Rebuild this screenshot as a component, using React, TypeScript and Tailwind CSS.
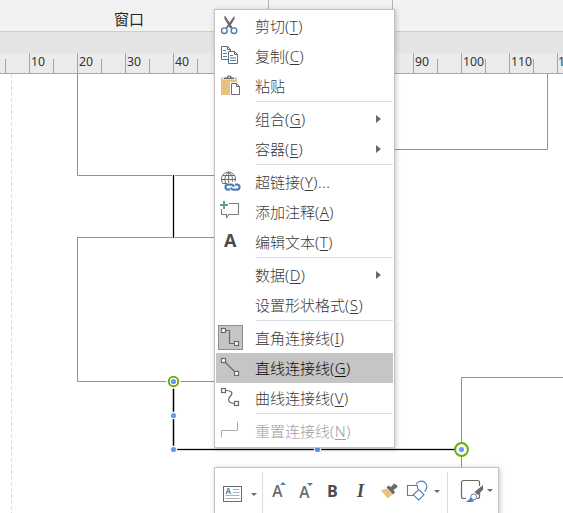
import type { ReactNode } from "react";

const GREY = "#6a6a6a";
const BLUE = "#4a80b5";

type Item = {
  label: string;
  hotkey?: string;
  tail?: string;
  icon?: ReactNode;
  submenu?: boolean;
  selected?: boolean;
  disabled?: boolean;
};

const Handle = ({ x, y }: { x: number; y: number }) => (
  <rect x={x - 2} y={y - 2} width="4" height="4" fill="#fff" stroke={GREY} strokeWidth="1.2" />
);

const CutIcon = (
  <>
    <path d="M8.300 5.200L9.300 5L16.500 16.500L14.800 17.800L12.800 15.500L10.500 18L9.500 17L12 13.500L8.500 8ZM18.300 5L18.800 7.500L14.800 14L12.700 12.500Z" fill={GREY} />
    <circle cx="8.3" cy="19.7" r="2.8" stroke={BLUE} strokeWidth="1.4" />
    <circle cx="18" cy="19.7" r="2.8" stroke={BLUE} strokeWidth="1.4" />
  </>
);

const CopyIcon = (
  <>
    <path d="M12 18.5H5.5V5.5H11.5L14.5 8.5V10M11.5 5.5V8.5H14.5" stroke={GREY} />
    <path d="M7 9.5H10M7 12.5H11M7 15.5H11" stroke={BLUE} />
    <path d="M12.5 10.5H18.5L21.5 13.5V22.5H12.5ZM18.5 10.5V13.5H21.5" fill="#fff" stroke={GREY} />
    <path d="M14 14.5H17M14 17H20M14 19.5H20" stroke={BLUE} />
  </>
);

const PasteIcon = (
  <>
    <rect x="5" y="6.5" width="16" height="17.5" fill="#e9c07d" />
    <path d="M7.5 5.5H19V9H7.5Z" fill="#fff" />
    <path d="M8 8.2V6.4H10.8C11 4 15.5 4 15.7 6.4H18.3V8.2Z" fill={GREY} />
    <circle cx="13.2" cy="6.2" r="0.8" fill="#fff" />
    <path d="M14 11H25V25H14Z" fill="#fff" />
    <path d="M15.5 12.5H20.5L23.5 15.5V23.5H15.5ZM20.5 12.5V15.5H23.5" fill="#fff" stroke={GREY} />
  </>
);

const LinkIcon = (
  <>
    <path d="M7.8 17.3A7 7 0 1 1 19 14.5M9.8 16.5C8 12.5 9 7.5 12.7 5.3C16 7.5 17 11 16.2 15M12.7 5.3V16M5.7 12.5H19.7M7 8.5H18.5M6.8 16.5H11" stroke={GREY} />
    <path d="M14 22.600H12A2.500 2.500 0 0 1 12 17.600H15.500Q17.800 17.800 17.500 20" stroke={BLUE} strokeWidth="2.200" />
    <path d="M19 17.600H21A2.500 2.500 0 0 1 21 22.600H17.500Q15 22.500 15.200 20.300" stroke={BLUE} strokeWidth="2.200" />
  </>
);

const CommentIcon = (
  <>
    <path d="M13 6.500H22.500V17.500H13L10.500 20.500V17.500H5.500V12" stroke="#7c7c7c" strokeWidth="1.100" />
    <path d="M8 4V12M4 8H12" stroke="#5fa08c" strokeWidth="2" />
  </>
);

const RightAngleIcon = (
  <>
    <rect x="2.500" y="2.500" width="24" height="24" fill="#c5c5c5" stroke="#8e8e8e" />
    <path d="M9.500 7.500H13.500V20.500H18.500" stroke={GREY} strokeWidth="1.200" />
    <Handle x={7.5} y={7.5} />
    <Handle x={20.5} y={20.5} />
  </>
);

const StraightIcon = (
  <>
    <path d="M8 8L20 20" stroke={GREY} strokeWidth="1.200" />
    <Handle x={7.5} y={7.5} />
    <Handle x={20.5} y={20.5} />
  </>
);

const CurveIcon = (
  <>
    <path d="M9.500 7.500C15.500 7.500 17.500 10 14.500 13C11 16.500 12.500 20.500 18.500 20.500" stroke={GREY} strokeWidth="1.200" />
    <Handle x={7.5} y={7.5} />
    <Handle x={20.5} y={20.5} />
  </>
);

const ResetIcon = <path d="M5.500 21.500V14.500H21.500V6" stroke="#a9a9a9" />;

const groups: Item[][] = [
  [
    { label: "剪切", hotkey: "T", icon: CutIcon },
    { label: "复制", hotkey: "C", icon: CopyIcon },
    { label: "粘贴", icon: PasteIcon },
  ],
  [
    { label: "组合", hotkey: "G", submenu: true },
    { label: "容器", hotkey: "E", submenu: true },
  ],
  [
    { label: "超链接", hotkey: "Y", tail: "...", icon: LinkIcon },
    { label: "添加注释", hotkey: "A", icon: CommentIcon },
    { label: "编辑文本", hotkey: "T", icon: "A" },
  ],
  [
    { label: "数据", hotkey: "D", submenu: true },
    { label: "设置形状格式", hotkey: "S" },
  ],
  [
    { label: "直角连接线", hotkey: "I", icon: RightAngleIcon },
    { label: "直线连接线", hotkey: "G", icon: StraightIcon, selected: true },
    { label: "曲线连接线", hotkey: "V", icon: CurveIcon },
  ],
  [{ label: "重置连接线", hotkey: "N", icon: ResetIcon, disabled: true }],
];

function MenuRow({ item }: { item: Item }) {
  const color = item.disabled ? "text-[#a0a0a0]" : item.selected ? "text-[#0c0c0c]" : "text-[#3a3a3a]";
  return (
    <div className={`flex h-[30px] items-center ${item.selected ? "bg-[#c5c5c5]" : ""}`}>
      <div className="h-[30px] w-[39px] shrink-0">
        {typeof item.icon === "string" ? (
          <span className="block pl-2 font-['Open_Sans','Noto_Sans',sans-serif] text-[18px] leading-[27px] font-bold text-[#4c4c4c]">
            {item.icon}
          </span>
        ) : (
          <svg className="block" width="39" height="30" fill="none">
            {item.icon}
          </svg>
        )}
      </div>
      <span className={`flex-1 text-[15px] leading-[30px] font-light whitespace-nowrap ${color}`}>
        {item.label}
        {item.hotkey && (
          <span className="tracking-[0.5px]">
            (<span className="underline decoration-1 underline-offset-2">{item.hotkey}</span>){item.tail}
          </span>
        )}
      </span>
      {item.submenu && (
        <svg className="mr-3" width="5" height="8">
          <path d="M0 0L5 4L0 8Z" fill={GREY} />
        </svg>
      )}
    </div>
  );
}

function ContextMenu() {
  return (
    <div className="absolute top-[9px] left-[214px] w-[181px] border border-[#c3c3c3] bg-white p-px shadow-[1px_1px_5px_rgba(0,0,0,0.22)]">
      {groups.map((group, i) => (
        <div key={i}>
          {i > 0 && <div className="mb-[2px] ml-10 h-px bg-[#dcdfe1]" />}
          {group.map((item) => (
            <MenuRow key={item.label} item={item} />
          ))}
        </div>
      ))}
    </div>
  );
}

const Caret = ({ x, y }: { x: number; y: number }) => (
  <path d={`M${x - 3} ${y - 1.5}H${x + 3}L${x} ${y + 1.5}Z`} fill={GREY} />
);

function MiniToolbar() {
  return (
    <div className="absolute top-[467px] left-[214px] flex h-[60px] w-[285px] border border-[#c3c3c3] bg-white shadow-[1px_1px_5px_rgba(0,0,0,0.22)]">
      <svg className="shrink-0" width="47" height="45" viewBox="215 468 47 45" fill="none">
        <rect x="223.500" y="486.500" width="18" height="15" stroke={GREY} />
        <text x="225.500" y="494" fontSize="8" fontWeight="700" fontFamily="Open Sans, sans-serif" fill={BLUE}>A</text>
        <path d="M233 489.500H239.500M233 492.500H239.500M225.500 495.500H239.500M225.500 498.500H239.500" stroke="#b0b0b0" />
        <Caret x={254} y={494.5} />
      </svg>
      <div className="mt-1 w-px bg-[#dcdcdc]" />
      <svg className="shrink-0" width="56" height="45" viewBox="263 468 56 45">
        <g fontSize="15.500" fontWeight="600" fontFamily="Open Sans, sans-serif" fill={GREY}>
          <text x="272.300" y="497">A</text>
          <text x="299.300" y="498">A</text>
        </g>
        <path d="M280 485L283 482L286 485ZM307 483L310 486L313 483Z" fill={BLUE} />
      </svg>
      <span className="w-[26px] pt-[11px] pl-2 font-['Open_Sans',sans-serif] text-[16px] leading-6 font-bold text-[#4c4c4c]">B</span>
      <span className="w-8 pt-[11px] pl-[12px] font-['Liberation_Serif',serif] text-[18px] leading-6 font-bold italic text-[#4c4c4c]">I</span>
      <svg className="shrink-0" width="26" height="45" viewBox="377 468 26 45">
        <path d="M380.800 490.500L386.500 488.500L392.500 494.500L388 498.500Z" fill="#e9c07d" />
        <path d="M386.500 487.500L388.500 485.500L391 487L394 483.500L397.300 485.500L397 487.500L393.500 490L395 492.500L393 494.500Z" fill={GREY} />
      </svg>
      <svg className="shrink-0" width="44" height="45" viewBox="403 468 44 45" fill="none" stroke={BLUE} strokeWidth="1.100">
        <path d="M413.500 495.500H407.500V485.500H417.500V489" />
        <path d="M416 484.500A5.700 5.700 0 1 1 424.500 491.500" />
        <path d="M418.700 489.500L424 494.800L418.700 500L413.300 494.800Z" />
        <g stroke="none"><Caret x={437} y={491.5} /></g>
      </svg>
      <div className="mt-1 w-px bg-[#dcdcdc]" />
      <svg className="shrink-0" width="50" height="45" viewBox="448 468 50 45" fill="none">
        <path d="M466 498.500H463.500Q461.500 498.500 461.500 496.500V482.500Q461.500 480.500 463.500 480.500H477.500Q479.500 480.500 479.500 482.500V486M479.500 492V496.500Q479.500 498.500 477.500 498.500H477" stroke={GREY} strokeWidth="1.200" />
        <path d="M483 485V489.500L478 495L474.500 492Z" fill={GREY} />
        <circle cx="473.700" cy="496.800" r="2.900" fill="#fff" stroke={BLUE} />
        <path d="M465.500 501.700C468.500 501 469 499 470.700 497.500C471.500 500 473 500.500 475 500.500C472.500 502.500 469 502.200 465.500 501.700Z" fill={BLUE} />
        <Caret x={490} y={490.5} />
      </svg>
    </div>
  );
}

// The menu covers the 50-80 stretch, so those ticks carry no number.
const labels = ["10", "20", "30", "40", "", "", "", "", "90", "100", "110", "1"];

const ticks = [
  { major: false, x: 5, label: "" },
  ...labels.flatMap((label, i) => [
    { major: true, x: 29 + i * 48, label },
    { major: false, x: 53 + i * 48, label: "" },
  ]),
];

function Ruler() {
  return (
    <svg className="block bg-[#ebebeb]" width="563" height="21">
      {ticks.map((t) => (
        <g key={t.x}>
          <rect x={t.x} y={t.major ? 0 : 6} width="1" height={t.major ? 20 : 14} fill="#a3a3a3" />
          {t.label && (
            <text x={t.x + (t.label === "1" ? 1 : 2)} y="13" fontSize="12.300" fill="#333" fontFamily="Noto Sans, sans-serif">{t.label}</text>
          )}
        </g>
      ))}
      <rect y="20" width="563" height="1" fill="#a8a8a8" />
    </svg>
  );
}

const Dot = ({ x, y }: { x: number; y: number }) => (
  <g>
    <circle cx={x + 0.5} cy={y + 0.5} r="3.700" fill="#fff" />
    <circle cx={x + 0.5} cy={y + 0.5} r="2.600" fill="#6699ff" />
  </g>
);

function Drawing() {
  return (
    <svg className="block bg-white" width="563" height="439" viewBox="0 74 563 439" fill="none">
      <path d="M11.500 74V513" stroke="#dedede" strokeDasharray="4 2" />
      <g stroke="#919191">
        <path d="M77.500 74V175.500H300M300 149.500H547.500V74" />
        <path d="M300 237.500H77.500V381.500H300M563 377.500H461.500V513" />
      </g>
      <path d="M173.500 175V238" stroke="#d9d9d9" strokeWidth="3" />
      <path d="M173.500 175V238" stroke="#000" />
      <path d="M173.500 381V449.500H461" stroke="#d9d9d9" strokeWidth="3" />
      <path d="M173.500 381V449.500H461" stroke="#000" strokeWidth="1.200" />
      <circle cx="173.500" cy="381.500" r="7.300" fill="#fff" />
      <circle cx="173.500" cy="381.500" r="4.700" fill="#fff" stroke="#69a812" strokeWidth="2" />
      <circle cx="461.500" cy="449.500" r="6.400" fill="#fff" stroke="#69a812" strokeWidth="2" />
      <Dot x={173} y={381} />
      <Dot x={173} y={415} />
      <Dot x={173} y={449} />
      <Dot x={317} y={449} />
      <Dot x={461} y={449} />
    </svg>
  );
}

export default function App() {
  return (
    <div className="relative h-[513px] w-[563px] overflow-hidden bg-white font-['Noto_Sans','Noto_Sans_CJK_SC',sans-serif]">
      <header className="flex h-8 border-b border-[#cccccc] bg-[#f2f2f2]">
        <div className="w-[269px] border-r border-[#b2b2b2] pl-[114px] text-[15px] leading-[38px] text-[#262626]">窗口</div>
        <div className="w-[124px] border-r border-[#b2b2b2]" />
      </header>
      <div className="h-[21px] bg-[#e4e4e4]" />
      <Ruler />
      <Drawing />
      <ContextMenu />
      <MiniToolbar />
    </div>
  );
}
